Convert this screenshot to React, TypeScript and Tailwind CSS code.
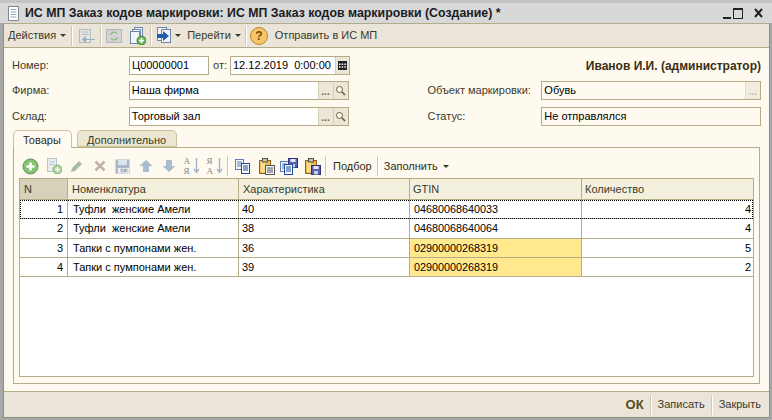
import type { ReactNode } from "react";

const rows = [
  { n: 1, name: "Туфли  женские Амели", ch: "40", gtin: "04680068640033", qty: 4, warn: false, current: true },
  { n: 2, name: "Туфли  женские Амели", ch: "38", gtin: "04680068640064", qty: 4, warn: false, current: false },
  { n: 3, name: "Тапки с пумпонами жен.", ch: "36", gtin: "02900000268319", qty: 5, warn: true, current: false },
  { n: 4, name: "Тапки с пумпонами жен.", ch: "39", gtin: "02900000268319", qty: 2, warn: true, current: false },
];

const cols = "grid grid-cols-[48px_171px_171px_172px_172px]";

function Sep() {
  return <div className="w-px h-[20px] bg-[#cfc8b4] border-r border-white box-content shrink-0" />;
}

function Caret({ className = "" }: { className?: string }) {
  return <span className={`w-0 h-0 border-x-[3px] border-x-transparent border-t-[3px] border-t-[#3a3a2a] inline-block ${className}`} />;
}

function PlusBadge() {
  return (
    <>
      <circle cx="11.5" cy="11.5" r="4.5" fill="#6fb35e" stroke="#3f8a3a" />
      <path d="M11.5 9v5M9 11.5h5" stroke="#fff" strokeWidth="1.6" />
    </>
  );
}

function SheetBlue({ x, y, w = 8, h = 10, color = "#1f4aa0" }: { x: number; y: number; w?: number; h?: number; color?: string }) {
  return (
    <>
      <rect x={x + 0.5} y={y + 0.5} width={w} height={h} fill="#f4f7fc" stroke={color} />
      <path d={`M${x + 2} ${y + 3}h${w - 3}M${x + 2} ${y + 5}h${w - 3}M${x + 2} ${y + 7}h${w - 3}`} stroke={color} />
    </>
  );
}

function Clipboard() {
  return (
    <>
      <rect x="1.5" y="2.5" width="11" height="13" fill="#eebc55" stroke="#8a6420" />
      <path d="M3 4h4v10H3z" fill="#f9dc90" />
      <rect x="4.5" y="0.5" width="5" height="3.5" fill="#c8c4b4" stroke="#5a5340" />
    </>
  );
}

function Floppy({ x, y }: { x: number; y: number }) {
  return (
    <>
      <rect x={x + 0.5} y={y + 0.5} width="9" height="9" fill="#5a62b4" stroke="#2b3278" />
      <rect x={x + 2.5} y={y + 1} width="5" height="3" fill="#e6e9f8" />
      <rect x={x + 3} y={y + 6} width="4" height="3.5" fill="#c9cde4" />
    </>
  );
}

function Sort({ flip = false }: { flip?: boolean }) {
  return (
    <div className="relative w-[16px] h-[20px] font-['Liberation_Serif',serif] text-[9px] leading-[10.4px] text-[#8c8478]">
      <div>{flip ? "Я" : "А"}</div>
      <div>{flip ? "А" : "Я"}</div>
      <svg width="7" height="16" viewBox="0 0 7 16" className="absolute right-0 top-[2px]">
        <path d="M3.5 0v14M1 11l2.5 3.5L6 11" fill="none" stroke="#9fb0c4" strokeWidth="1.3" />
      </svg>
    </div>
  );
}

function Arrow({ down = false }: { down?: boolean }) {
  return (
    <svg width="14" height="14" viewBox="0 0 14 14">
      <path d={down ? "M4 1h6v6h3.5L7 13 .5 7H4z" : "M4 13h6V7h3.5L7 1 .5 7H4z"} fill="#a9bccb" />
    </svg>
  );
}

function Tool({ w, children }: { w: number; children: ReactNode }) {
  return <div className="h-full flex items-center justify-center shrink-0" style={{ width: w }}>{children}</div>;
}

function Field({ w, value, children, disabled }: { w: string; value: string; children?: ReactNode; disabled?: boolean }) {
  return (
    <div className={`${w} h-[19px] flex border border-[#b3ac86] bg-white`}>
      <div className={`flex-1 px-[2px] leading-[17px] text-black whitespace-pre ${disabled ? "bg-[#fffaf0]" : ""}`}>{value}</div>
      {children}
    </div>
  );
}

function Btn({ children, dim }: { children: ReactNode; dim?: boolean }) {
  return (
    <div className={`w-[15px] h-full border-l border-[#d6cfb4] flex items-center justify-center ${dim ? "bg-[#f0ecdf] text-[#bbb] border-l-[#e4dfcd]" : "bg-[#ece6d6] text-[#6a5a2a]"}`}>
      {children}
    </div>
  );
}

function Dots({ dim }: { dim?: boolean }) {
  return <span className={`text-[10px] leading-[17px] mt-[2px] font-bold ${dim ? "text-[#c4c0b0]" : "text-[#7a6a3a]"}`}>...</span>;
}

function Lens() {
  return (
    <svg width="11" height="11" viewBox="0 0 11 11">
      <circle cx="4.5" cy="4.5" r="3" fill="#fff" stroke="#6a5a2a" />
      <path d="M7 7l3 3" stroke="#6a5a2a" strokeWidth="1.6" />
    </svg>
  );
}

export default function App() {
  return (
    <div className="w-[772px] h-[420px] bg-[#a8a8a8] flex flex-col overflow-hidden font-['Liberation_Sans',Arial,sans-serif] text-[11px] text-[#3a3a2a]">
      <div className="h-[3px] bg-[#c4c4c4] shrink-0" />
      <div className="h-[20px] bg-[#d8d8d8] flex items-center pl-[7px] pr-[9px] shrink-0">
        <svg width="13" height="15" viewBox="0 0 13 15" className="mr-[5px]">
          <path d="M1.5 .5h10v14h-10z" fill="#fff" stroke="#7c8794" />
          <path d="M3.5 3.5h6M3.5 6h6M3.5 8.5h6M3.5 11h6" stroke="#9aa6b5" />
        </svg>
        <div className="text-[12.35px] font-bold text-[#1c1c1c] whitespace-nowrap flex-1">ИС МП Заказ кодов маркировки: ИС МП Заказ кодов маркировки (Создание) *</div>
        <div className="flex items-center">
          <div className="w-[8px] h-[2px] bg-[#222] mt-[10px] mr-[2px]" />
          <div className="w-[10px] h-[11px] border border-[#222] border-t-2 mr-[11px]" />
          <svg width="9" height="10" viewBox="0 0 9 10"><path d="M1 1l7 8M8 1l-7 8" stroke="#222" strokeWidth="2" /></svg>
        </div>
      </div>
      <div className="flex-1 min-h-0 flex flex-col ml-[3px] mr-[2px] border border-[#8e8e80] border-t-[#b3ac86]">
        <div className="h-[24px] bg-[#ebe5d9] border-b border-[#b3ac86] flex items-center pl-[4px] shrink-0">
          <span>Действия</span>
          <Caret className="ml-[4px] mr-[5px]" />
          <Sep />
          <Tool w={27}>
            <svg width="18" height="16" viewBox="0 0 18 16" className="opacity-50">
              <rect x="1.5" y="1.5" width="11" height="13" fill="#dfe6ee" stroke="#7f93a8" />
              <path d="M3.5 4h7M3.5 6.5h7" stroke="#7f93a8" />
              <path d="M17 8v3h-9V8l-4 3.5L8 15v-3h9z" fill="#3f78a8" />
            </svg>
          </Tool>
          <Sep />
          <Tool w={24}>
            <svg width="16" height="14" viewBox="0 0 16 14" className="opacity-60">
              <rect x=".5" y=".5" width="15" height="13" fill="#c3ccd2" stroke="#8a98a4" />
              <path d="M4.5 6a3.5 3.5 0 0 1 6.5-1M11.5 8a3.5 3.5 0 0 1-6.5 1" fill="none" stroke="#5f9f5f" strokeWidth="1.4" />
            </svg>
          </Tool>
          <Tool w={24}>
            <svg width="16" height="18" viewBox="0 0 16 18">
              <rect x="4.5" y=".5" width="8" height="11" fill="#f2f6fb" stroke="#6e87a8" />
              <rect x="2.5" y="2.5" width="8" height="12" fill="#f2f6fb" stroke="#6e87a8" />
              <rect x=".5" y="4.5" width="9" height="12" fill="#f2f6fb" stroke="#6e87a8" />
              <g transform="translate(0 2)"><PlusBadge /></g>
            </svg>
          </Tool>
          <Sep />
          <Tool w={24}>
            <svg width="16" height="17" viewBox="0 0 16 17">
              <rect x="1.5" y=".5" width="9" height="13" fill="#f2f6fb" stroke="#6e87a8" />
              <rect x="5.5" y="2.5" width="9" height="13" fill="#f2f6fb" stroke="#6e87a8" />
              <path d="M1 7h6V4l6 5-6 5v-3H1z" fill="#1f5fa8" />
            </svg>
          </Tool>
          <Caret className="-ml-[1px] mr-[6px]" />
          <span>Перейти</span>
          <Caret className="ml-[4px] mr-[4px]" />
          <Sep />
          <div className="w-[18px] h-[18px] ml-[3px] mr-[7px] rounded-full bg-[#f7c766] border border-[#b9852a] text-center font-bold text-[12px] leading-[16px] text-[#6e4a10]">?</div>
          <span>Отправить в ИС МП</span>
        </div>
        <div className="flex-1 min-h-0 bg-[#fffaf0] flex flex-col">
          <div className="px-[8px] pt-[8px] flex flex-col shrink-0">
            <div className="flex items-center h-[19px] mb-[6px]">
              <div className="w-[117px]">Номер:</div>
              <Field w="w-[80px]" value="Ц00000001" />
              <div className="w-[21px] pl-[4px]">от:</div>
              <Field w="w-[120px]" value="12.12.2019  0:00:00">
                <div className="w-[14px] h-full border-l border-[#d6cfb4] bg-[#ece6d6] flex items-center justify-center">
                  <svg width="9" height="9" viewBox="0 0 9 9"><path d="M0 0h9v9H0z" fill="#222" /><path d="M1 2.5h1.5v1.5H1zM3.7 2.5h1.5v1.5H3.7zM6.4 2.5h1.5v1.5H6.4zM1 5.2h1.5v1.5H1zM3.7 5.2h1.5v1.5H3.7zM6.4 5.2h1.5v1.5H6.4z" fill="#fff" /></svg>
                </div>
              </Field>
              <div className="flex-1 text-right font-bold text-[12px] text-[#3a2f12]">Иванов И.И. (администратор)</div>
            </div>
            <div className="flex items-center h-[19px] mb-[7px]">
              <div className="w-[117px]">Фирма:</div>
              <Field w="w-[220px]" value="Наша фирма">
                <Btn><Dots /></Btn>
                <Btn><Lens /></Btn>
              </Field>
              <div className="w-[114px] pl-[79px] box-content whitespace-nowrap">Объект маркировки:</div>
              <Field w="w-[220px]" value="Обувь" disabled>
                <Btn dim><Dots dim /></Btn>
              </Field>
            </div>
            <div className="flex items-center h-[19px]">
              <div className="w-[117px]">Склад:</div>
              <Field w="w-[220px]" value="Торговый зал">
                <Btn><Dots /></Btn>
                <Btn><Lens /></Btn>
              </Field>
              <div className="w-[114px] pl-[79px] box-content">Статус:</div>
              <Field w="w-[220px]" value="Не отправлялся" disabled />
            </div>
          </div>

          <div className="flex items-start pl-[9px] h-[17px] mt-[4px] shrink-0 relative z-10">
            <div className="w-[59px] h-[18px] bg-[#fffaf0] border border-[#c9c29c] border-b-0 rounded-t-[5px] pl-[9px] pt-[1px] text-[#2c2c20]">Товары</div>
            <div className="w-[100px] h-[17px] ml-[5px] bg-[#ebe6d0] border border-[#c9c29c] rounded-t-[5px] pl-[9px] pt-[1px] text-[#3a3a2a]">Дополнительно</div>
          </div>

          <div className="flex-1 min-h-0 mx-[9px] mb-[7px] border border-[#b3ac86] flex flex-col px-[5px] pb-[6px] pt-[6px]">
            <div className="h-[24px] flex items-center shrink-0">
              <Tool w={23}>
                <svg width="17" height="17" viewBox="0 0 17 17"><circle cx="8.5" cy="8.5" r="7.5" fill="#84c470" stroke="#5f8f5f" /><path d="M8.5 4.5v8M4.5 8.5h8" stroke="#fff" strokeWidth="2.6" /></svg>
              </Tool>
              <Tool w={23}>
                <svg width="16" height="16" viewBox="0 0 16 16" className="opacity-60">
                  <rect x="1.5" y=".5" width="9" height="13" fill="#dce5ee" stroke="#8ea4bc" />
                  <path d="M3.5 4h5M3.5 6.5h5" stroke="#8ea4bc" />
                  <PlusBadge />
                </svg>
              </Tool>
              <Tool w={23}><svg width="14" height="14" viewBox="0 0 14 14"><path d="M2 9l7-7 3 3-7 7-4 1z" fill="#a9bca6" /></svg></Tool>
              <Tool w={23}><svg width="12" height="12" viewBox="0 0 12 12"><path d="M1.5 1.5l9 9M10.5 1.5l-9 9" stroke="#c3b2a8" strokeWidth="2.6" /></svg></Tool>
              <Tool w={23}>
                <svg width="15" height="15" viewBox="0 0 15 15">
                  <path d="M.5.5h14v14H.5z" fill="#a9b7c6" />
                  <path d="M3 1h9v5H3z" fill="#dde3ea" />
                  <path d="M3 9h11v5H3z" fill="#eef1f4" />
                  <path d="M6 10h2v3H6zM9.5 10h1v3h-1zM11 11l2-1M11 12l2 1" stroke="#8a9aa8" strokeWidth=".8" fill="none" />
                </svg>
              </Tool>
              <Tool w={23}><Arrow /></Tool>
              <Tool w={23}><Arrow down /></Tool>
              <Tool w={23}><Sort /></Tool>
              <Tool w={23}><Sort flip /></Tool>
              <Tool w={4}><Sep /></Tool>
              <Tool w={26}>
                <svg width="16" height="15" viewBox="0 0 16 15">
                  <SheetBlue x={0} y={0} color="#5a7cb8" />
                  <SheetBlue x={6} y={4} color="#1f4aa0" />
                </svg>
              </Tool>
              <Tool w={20}>
                <svg width="17" height="17" viewBox="0 0 17 17">
                  <Clipboard />
                  <SheetBlue x={7} y={7} w={9} h={9} color="#555" />
                </svg>
              </Tool>
              <Tool w={26}>
                <svg width="18" height="17" viewBox="0 0 18 17">
                  <SheetBlue x={0} y={3} color="#5a7cb8" />
                  <Floppy x={8} y={0} />
                  <SheetBlue x={4} y={6} color="#1f4aa0" />
                </svg>
              </Tool>
              <Tool w={20}>
                <svg width="17" height="17" viewBox="0 0 17 17">
                  <Clipboard />
                  <Floppy x={7} y={7} />
                </svg>
              </Tool>
              <Tool w={8}><Sep /></Tool>
              <span className="ml-[3px] mr-[5px] text-[#2c2c20]">Подбор</span>
              <Sep />
              <span className="ml-[5px] mr-[5px] text-[#2c2c20]">Заполнить</span>
              <Caret />
            </div>

            <div className="flex-1 min-h-0 bg-white border border-[#b3ac86] text-black overflow-hidden">
              <div className={`${cols} h-[21px] border-b border-[#b3ac86] bg-[#f3f0dd] text-[#3a3a2a] leading-[20px]`}>
                <div className="bg-[#d6d2ba] border-r border-[#b3ac86] pl-[4px]">N</div>
                <div className="border-r border-[#b3ac86] pl-[4px]">Номенклатура</div>
                <div className="border-r border-[#b3ac86] pl-[4px]">Характеристика</div>
                <div className="border-r border-[#b3ac86] pl-[3px]">GTIN</div>
                <div className="pl-[3px]">Количество</div>
              </div>
              {rows.map((r) => (
                <div key={r.n} className={`${cols} h-[19.25px] leading-[18px] border-b border-[#b3ac86] ${r.current ? "outline-1 outline-dotted -outline-offset-1 outline-black" : ""}`}>
                  <div className="border-r border-[#b3ac86] text-right pr-[4px]">{r.n}</div>
                  <div className="border-r border-[#b3ac86] pl-[5px] whitespace-pre">{r.name}</div>
                  <div className="border-r border-[#b3ac86] pl-[3px]">{r.ch}</div>
                  <div className={`border-r border-[#b3ac86] pl-[4px] text-[10.8px] ${r.warn ? "bg-[#ffe98c]" : ""}`}>{r.gtin}</div>
                  <div className="text-right pr-[3px]">{r.qty}</div>
                </div>
              ))}
            </div>
          </div>

          <div className="h-[26px] bg-[#ebe5d9] border-t border-[#b3ac86] flex items-center justify-end shrink-0 pr-[8px] gap-[6px]">
            <span className="font-bold text-[13px] text-[#5a4a20]">ОК</span>
            <Sep />
            <span>Записать</span>
            <Sep />
            <span>Закрыть</span>
          </div>
        </div>
      </div>
      <div className="h-[2px] shrink-0" />
    </div>
  );
}
